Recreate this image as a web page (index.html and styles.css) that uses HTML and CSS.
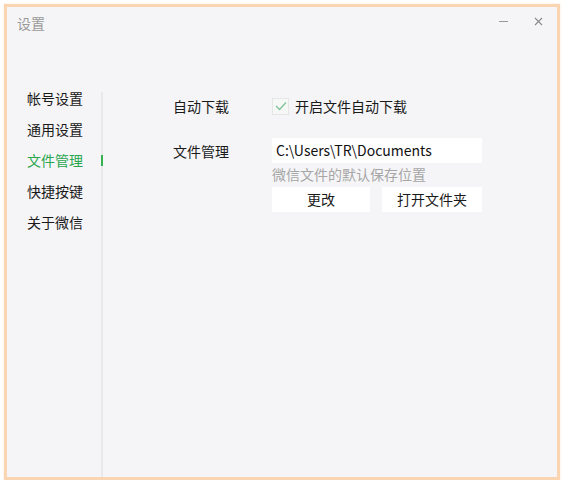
FILE: index.html
```html
<!DOCTYPE html>
<html>
<head>
<meta charset="utf-8">
<link rel="stylesheet" href="styles.css">
</head>
<body>
<div class="window">
  <div class="titlebar">
    <span class="title">设置</span>
    <div class="controls">
      <span class="min"></span>
      <svg class="close" width="9" height="9" viewBox="0 0 9 9"><path d="M1 1L8 8M8 1L1 8" stroke="#8a8a8a" stroke-width="1.1"/></svg>
    </div>
  </div>
  <div class="main">
    <div class="sidebar">
      <div class="nav">帐号设置</div>
      <div class="nav">通用设置</div>
      <div class="nav active">文件管理</div>
      <div class="nav">快捷按键</div>
      <div class="nav">关于微信</div>
    </div>
    <div class="content">
      <div class="row row-dl">
        <div class="label">自动下载</div>
        <div class="check">
          <span class="box"><svg width="12" height="10" viewBox="0 0 12 10"><path d="M1 5L4.5 8.5L11 1.5" fill="none" stroke="#7fc29b" stroke-width="1.3"/></svg></span>
          <span>开启文件自动下载</span>
        </div>
      </div>
      <div class="row row-fm">
        <div class="label label-fm">文件管理</div>
        <div class="field">
          <div class="input">C:\Users\TR\Documents</div>
          <div class="hint">微信文件的默认保存位置</div>
          <div class="buttons">
            <div class="btn btn1">更改</div>
            <div class="btn btn2">打开文件夹</div>
          </div>
        </div>
      </div>
    </div>
  </div>
</div>
</body>
</html>
```
FILE: styles.css
```css
html, body {
  margin: 0;
  padding: 0;
  background: #ffffff;
}
body {
  font-family: "Noto Sans CJK SC", "Noto Sans", sans-serif;
  font-size: 14px;
  color: #1a1a1a;
}
.window {
  margin: 4px 0 0 4px;
  width: 550px;
  height: 470px;
  border: 3px solid #fbd4b2;
  box-shadow: 0 0 2px #fde5d0;
  background: #f5f5f7;
  display: flex;
  flex-direction: column;
}
.titlebar {
  height: 81px;
  position: relative;
  flex: none;
}
.title {
  position: absolute;
  left: 10px;
  top: 6px;
  color: #9a9a9a;
  font-size: 14px;
  line-height: 20px;
}
.controls {
  position: absolute;
  right: 14px;
  top: 10px;
  display: flex;
  align-items: center;
  gap: 26px;
}
.min {
  width: 9px;
  height: 1px;
  background: #999;
}
.close {
  display: block;
}
.main {
  flex: 1;
  display: flex;
}
.sidebar {
  width: 94px;
  border-right: 2px solid #e9e9ec;
  margin-top: 4px;
}
.nav {
  height: 31px;
  line-height: 31px;
  padding-left: 20px;
  position: relative;
}
.sidebar .nav:first-child { margin-top: -9px; }
.nav.active {
  color: #2aa64f;
}
.nav.active::after {
  content: "";
  position: absolute;
  right: -2px;
  top: 10px;
  width: 2px;
  height: 11px;
  background: #33b24f;
}
.content {
  flex: 1;
  padding-left: 70px;
}
.row {
  display: flex;
}
.label {
  width: 99px;
  line-height: 20px;
}
.row-dl {
  margin-top: 8px;
  align-items: center;
}
.check {
  display: flex;
  align-items: center;
  gap: 6px;
}
.box {
  width: 17px;
  height: 17px;
  background: #f6f8f6;
  border: 1px solid #e6e6e6;
  box-sizing: border-box;
  display: flex;
  align-items: center;
  justify-content: center;
}
.row-fm {
  margin-top: 22px;
}
.label-fm {
  margin-top: 3px;
}
.field {
  width: 210px;
}
.input {
  height: 25px;
  line-height: 25px;
  background: #ffffff;
  padding-left: 4px;
  font-size: 14px;
  color: #111;
}
.hint {
  color: #a6a6a6;
  line-height: 20px;
  margin-top: 1px;
}
.buttons {
  display: flex;
  justify-content: space-between;
  margin-top: 3px;
}
.btn {
  height: 25px;
  line-height: 25px;
  background: #ffffff;
  text-align: center;
  color: #1a1a1a;
}
.btn1 { width: 98px; }
.btn2 { width: 100px; }
```
